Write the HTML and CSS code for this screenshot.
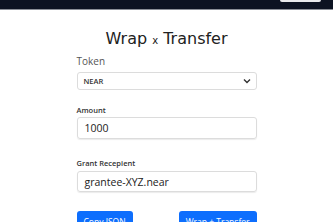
FILE: index.html
```html
<!DOCTYPE html>
<html>
<head>
  <title>Wrap x Transfer</title>
  <link rel="stylesheet" href="styles.css">
</head>
<body>
  <div class="navbar">
    <div class="nav-btn"></div>
  </div>

  <div class="main">
    <h1 class="title">Wrap <span class="small-x">x</span> Transfer</h1>

    <label class="token-label" for="token">Token</label>
    <div class="select-box">
      <span>NEAR</span>
      <svg width="8" height="6" viewBox="0 0 8 6"><path d="M1 1.5 L4 4.5 L7 1.5" fill="none" stroke="#333" stroke-width="1.4"/></svg>
    </div>

    <label class="field-label" for="amount">Amount</label>
    <div class="input-box amount">1000</div>

    <label class="field-label grantee-label" for="grantee">Grant Recepient</label>
    <div class="input-box grantee">grantee-XYZ.near</div>

    <div class="actions">
      <button class="btn">Copy JSON</button>
      <button class="btn">Wrap + Transfer</button>
    </div>
  </div>
</body>
</html>
```

FILE: styles.css
```css
body {
  margin: 0;
  background: #fff;
  font-family: "Open Sans", sans-serif;
  color: #222;
  overflow: hidden;
}

.navbar {
  height: 9px;
  background: #0d1322;
  border-bottom: 1px solid #8b8f97;
  display: flex;
  justify-content: flex-end;
  padding-right: 12px;
}
.nav-btn {
  width: 41px;
  height: 2px;
  background: #e9eaec;
  border-radius: 0 0 3px 3px;
}

.main {
  width: 180px;
  margin: 0 auto;
  display: flex;
  flex-direction: column;
}

.title {
  margin: 18px 0 0 0;
  text-align: center;
  font-family: "DejaVu Sans", sans-serif;
  font-size: 16px;
  font-weight: 500;
  color: #222;
  line-height: 22px;
}
.small-x {
  font-size: 10px;
  line-height: 0;
}

.token-label {
  margin-top: 5px;
  font-size: 10px;
  color: #555;
  line-height: 13px;
}

.select-box {
  margin-top: 4px;
  height: 18px;
  border: 1px solid #dcdcdc;
  border-radius: 3px;
  box-sizing: border-box;
  display: flex;
  align-items: center;
  justify-content: space-between;
  padding: 0 5px 0 6px;
  font-size: 7.5px;
  font-weight: 600;
  color: #333;
}

.field-label {
  margin-top: 15px;
  font-size: 7.5px;
  font-weight: 600;
  color: #333;
  line-height: 10px;
}
.grantee-label {
  margin-top: 19px;
}

.input-box {
  margin-top: 2px;
  height: 22px;
  border: 1px solid #dcdcdc;
  border-radius: 3px;
  box-sizing: border-box;
  box-shadow: 0 1px 1px rgba(0,0,0,0.08);
  display: flex;
  align-items: center;
  padding: 0 7px;
  font-size: 10.5px;
  color: #222;
}
.grantee {
  margin-top: 3px;
  height: 21px;
}

.actions {
  margin-top: 19px;
  display: flex;
  justify-content: space-between;
}
.btn {
  background: #0d6efd;
  color: #fff;
  border: none;
  border-radius: 3px;
  height: 20px;
  padding: 0 7px;
  font-family: "Open Sans", sans-serif;
  font-size: 8.5px;
}
```
